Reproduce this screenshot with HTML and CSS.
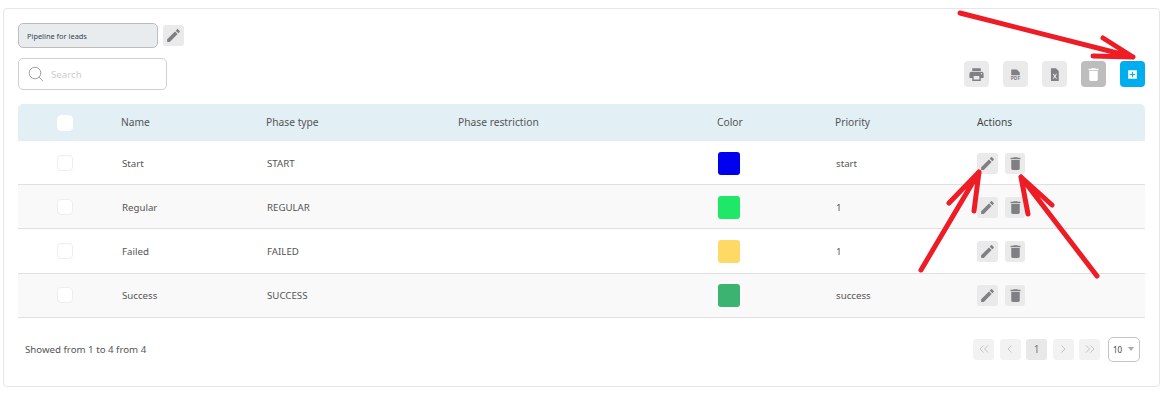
FILE: index.html
```html
<!DOCTYPE html>
<html lang="en">
<head>
<meta charset="utf-8">
<title>Pipeline phases</title>
<link rel="stylesheet" href="styles.css">
</head>
<body>
<svg class="sprite" width="0" height="0" aria-hidden="true">
  <symbol id="i-pencil" viewBox="0 0 24 24"><path d="M3 17.25V21h3.75L17.81 9.94l-3.75-3.75L3 17.25zM20.71 7.04a1 1 0 0 0 0-1.41l-2.34-2.34a1 1 0 0 0-1.41 0l-1.83 1.83 3.75 3.75 1.83-1.83z"/></symbol>
  <symbol id="i-trash" viewBox="0 0 24 24"><path d="M6 19c0 1.1.9 2 2 2h8c1.1 0 2-.9 2-2V7H6v12zM19 4h-3.5l-1-1h-5l-1 1H5v2h14V4z"/></symbol>
  <symbol id="i-first" viewBox="0 0 12 12"><path d="M5.500 2.500L2 6l3.500 3.500M10 2.500L6.500 6l3.500 3.500"/></symbol>
  <symbol id="i-prev" viewBox="0 0 12 12"><path d="M7.500 2.500L4 6l3.500 3.500"/></symbol>
  <symbol id="i-next" viewBox="0 0 12 12"><path d="M4.500 2.500L8 6l-3.500 3.500"/></symbol>
  <symbol id="i-last" viewBox="0 0 12 12"><path d="M2 2.500L5.500 6 2 9.500M6.500 2.500L10 6l-3.500 3.500"/></symbol>
</svg>
<main class="card">
  <div class="pipeline-row">
    <div class="pipeline-select">Pipeline for leads</div>
    <button class="icon-btn edit-pipeline"><svg class="ico"><use href="#i-pencil"/></svg></button>
  </div>
  <div class="toolbar">
    <div class="search">
      <svg class="search-ico" viewBox="0 0 16 16"><circle cx="7" cy="7" r="5.8"/><path d="M11 11l4 4"/></svg>
      <span>Search</span>
    </div>
    <div class="tools">
      <button class="tool"><svg class="tool-ico" viewBox="0 0 24 24"><path d="M19 8H5c-1.66 0-3 1.34-3 3v6h4v4h12v-4h4v-6c0-1.66-1.34-3-3-3zm-3 11H8v-5h8v5zm3-7c-.55 0-1-.45-1-1s.45-1 1-1 1 .45 1 1-.45 1-1 1zm-1-9H6v4h12V3z"/></svg></button>
      <button class="tool"><svg class="tool-ico" viewBox="0 0 24 24"><path d="M6 5h8l4 4v4H6z"/><text x="12" y="20" class="pdf-label">PDF</text></svg></button>
      <button class="tool"><svg class="tool-ico" viewBox="0 0 24 24"><path fill-rule="evenodd" d="M7 3h7l4 4v14H7zM9.500 11l2 3.500-2 3.500h1.300l1.700-2.500 1.700 2.500h1.300l-2-3.500 2-3.500h-1.300l-1.700 2.500-1.700-2.500z"/></svg></button>
      <button class="tool tool-delete"><svg class="tool-ico" viewBox="0 0 24 24"><path d="M6 19c0 1.100.9 2 2 2h8c1.100 0 2-.9 2-2V7H6v12zM19 4h-3.500l-1-1h-5l-1 1H5v2h14V4z"/></svg></button>
      <button class="tool tool-add"><svg class="tool-ico" viewBox="0 0 24 24"><path fill-rule="evenodd" d="M4 4h16v16H4zM11 7v4H7v2h4v4h2v-4h4v-2h-4V7z"/></svg></button>
    </div>
  </div>
  <table class="grid">
    <colgroup>
      <col class="c-check"><col class="c-name"><col class="c-type"><col class="c-restrict"><col class="c-color"><col class="c-priority"><col>
    </colgroup>
    <thead>
      <tr>
        <th class="check-cell"><span class="check check-head"></span></th>
        <th>Name</th><th>Phase type</th><th>Phase restriction</th><th>Color</th><th>Priority</th><th class="actions-head">Actions</th>
      </tr>
    </thead>
    <tbody>
      <tr>
        <td class="check-cell"><span class="check"></span></td>
        <td>Start</td><td>START</td><td></td>
        <td><span class="swatch" style="background:#0000ee"></span></td>
        <td>start</td>
        <td><div class="actions"><button class="icon-btn"><svg class="ico"><use href="#i-pencil"/></svg></button><button class="icon-btn narrow"><svg class="ico"><use href="#i-trash"/></svg></button></div></td>
      </tr>
      <tr>
        <td class="check-cell"><span class="check"></span></td>
        <td>Regular</td><td>REGULAR</td><td></td>
        <td><span class="swatch" style="background:#1fe868"></span></td>
        <td>1</td>
        <td><div class="actions"><button class="icon-btn"><svg class="ico"><use href="#i-pencil"/></svg></button><button class="icon-btn narrow"><svg class="ico"><use href="#i-trash"/></svg></button></div></td>
      </tr>
      <tr>
        <td class="check-cell"><span class="check"></span></td>
        <td>Failed</td><td>FAILED</td><td></td>
        <td><span class="swatch" style="background:#ffd966"></span></td>
        <td>1</td>
        <td><div class="actions"><button class="icon-btn"><svg class="ico"><use href="#i-pencil"/></svg></button><button class="icon-btn narrow"><svg class="ico"><use href="#i-trash"/></svg></button></div></td>
      </tr>
      <tr>
        <td class="check-cell"><span class="check"></span></td>
        <td>Success</td><td>SUCCESS</td><td></td>
        <td><span class="swatch" style="background:#3cb371"></span></td>
        <td>success</td>
        <td><div class="actions"><button class="icon-btn"><svg class="ico"><use href="#i-pencil"/></svg></button><button class="icon-btn narrow"><svg class="ico"><use href="#i-trash"/></svg></button></div></td>
      </tr>
    </tbody>
  </table>
  <div class="footer">
    <span class="count">Showed from 1 to 4 from 4</span>
    <div class="pager">
      <button class="page"><svg class="chev"><use href="#i-first"/></svg></button>
      <button class="page"><svg class="chev"><use href="#i-prev"/></svg></button>
      <button class="page current">1</button>
      <button class="page"><svg class="chev"><use href="#i-next"/></svg></button>
      <button class="page"><svg class="chev"><use href="#i-last"/></svg></button>
      <div class="size">10<span class="caret"></span></div>
    </div>
  </div>
</main>
<svg class="arrows" viewBox="0 0 1165 401" aria-hidden="true">
  <path d="M960 13L1133 57M1103 38L1133 57M1093 56L1133 57"/>
  <path d="M921 270L979 172M949 203L979 172M974 211L979 172"/>
  <path d="M1097 276L1021 177M1052 205L1021 177M1028 214L1021 177"/>
</svg>
</body>
</html>
```
FILE: styles.css
```css
* { box-sizing: border-box; }
html, body { margin: 0; height: 100%; background: #fff; }
body {
  padding: 8px 5px 0 3px;
  font-family: "Noto Sans", "Open Sans", sans-serif;
  font-size: 9.700px;
  color: #555;
  overflow: hidden;
}
button { font: inherit; border: 0; padding: 0; cursor: pointer; }
.sprite { position: absolute; }

.card {
  height: 379px;
  border: 1px solid #e6e6ea;
  border-radius: 4px;
  padding: 14px 14px 0;
}

.pipeline-row { display: flex; align-items: center; gap: 5px; height: 25px; }
.pipeline-select {
  width: 140px;
  height: 25px;
  padding-left: 8px;
  display: flex;
  align-items: center;
  background: #e9ecef;
  border: 1px solid #bdbdbd;
  border-radius: 5px;
  font-size: 7.400px;
  color: #345;
}
.icon-btn {
  width: 21px;
  height: 21px;
  display: flex;
  align-items: center;
  justify-content: center;
  background: #eaeaea;
  border-radius: 3px;
}
.icon-btn.narrow { width: 20px; }
.ico { width: 17px; height: 17px; fill: #808084; }

.toolbar { display: flex; justify-content: space-between; margin-top: 10px; height: 46px; }
.search {
  width: 149px;
  height: 32px;
  display: flex;
  align-items: center;
  gap: 7px;
  padding-left: 9px;
  border: 1px solid #cfcfd4;
  border-radius: 5px;
  color: #cdcdcd;
}
.search-ico { width: 16px; height: 16px; fill: none; stroke: #999; stroke-width: 0.9; }
.tools { display: flex; gap: 14px; padding-top: 3px; }
.tool {
  width: 25px;
  height: 26px;
  display: flex;
  align-items: center;
  justify-content: center;
  background: #eaeaea;
  border-radius: 4px;
}
.tool-ico { width: 17px; height: 17px; fill: #808084; }
.pdf-label { font-size: 7px; font-weight: 700; text-anchor: middle; fill: #808084; }
.tool-delete { background: #bdbdbd; }
.tool-delete .tool-ico { fill: #fff; }
.tool-add { background: #00aeef; }
.tool-add .tool-ico { fill: #fff; width: 13px; height: 13px; }

.grid { width: 1127px; table-layout: fixed; border-collapse: separate; border-spacing: 0; }
.c-check { width: 103px; }
.c-name { width: 145px; }
.c-type { width: 192px; }
.c-restrict { width: 259px; }
.c-color { width: 118px; }
.c-priority { width: 141px; }
.grid th {
  height: 37px;
  padding: 0 0 2px;
  text-align: left;
  font-weight: 400;
  font-size: 10.250px;
  background: #e2eff5;
}
.grid th:first-child { border-radius: 5px 0 0 0; }
.grid th.actions-head { border-radius: 0 5px 0 0; padding-left: 1px; color: #444; }
.grid td { height: 44.200px; padding: 1px 0 0 1px; border-bottom: 1px solid #e0e0e4; }
.grid tbody tr:nth-child(even) td { background: #f9f9f9; }
.grid .check-cell { padding: 0 0 0 39px; }
.check {
  display: block;
  width: 16px;
  height: 16px;
  background: #fff;
  border: 1px solid #eee;
  border-radius: 4px;
}
.check-head { border-color: #fff; }
.swatch { display: block; width: 22px; height: 23px; border-radius: 3px; }
.actions { display: flex; gap: 7px; }

.footer { display: flex; justify-content: space-between; align-items: center; height: 63px; padding-left: 7px; }
.pager { display: flex; align-items: center; gap: 5.500px; padding-right: 5px; }
.page {
  width: 21px;
  height: 21px;
  display: flex;
  align-items: center;
  justify-content: center;
  background: #f2f2f2;
  border-radius: 3px;
  color: #777;
}
.page.current { background: #e8e8e8; font-size: 10px; }
.chev { width: 12px; height: 12px; fill: none; stroke: #c4c4c4; stroke-width: 1; }
.size {
  width: 32px;
  height: 25px;
  margin-left: 2.500px;
  padding-left: 4px;
  display: flex;
  align-items: center;
  gap: 6px;
  border: 1px solid #c4c4c4;
  border-radius: 5px;
  background: #fff;
  font-size: 8px;
  color: #444;
}
.caret { width: 0; height: 0; border: 3px solid transparent; border-top: 4px solid #aaa; border-bottom: 0; }

.arrows {
  position: absolute;
  left: 0;
  top: 0;
  width: 1165px;
  height: 401px;
  fill: none;
  stroke: #ee1c25;
  stroke-width: 5;
  stroke-linecap: round;
  pointer-events: none;
}
```
